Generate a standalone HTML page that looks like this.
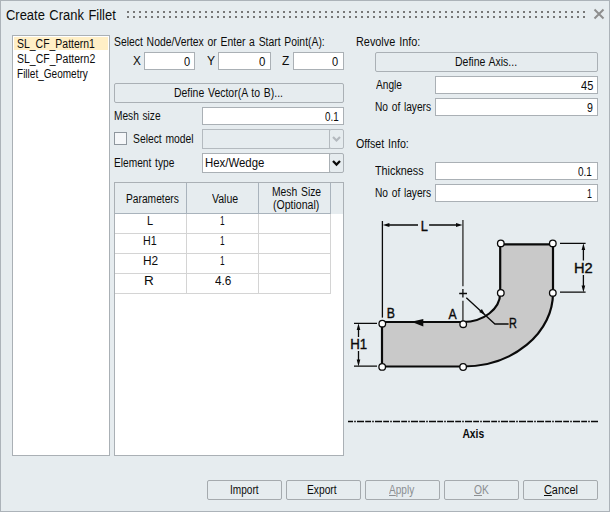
<!DOCTYPE html>
<html><head><meta charset="utf-8"><title>Create Crank Fillet</title>
<style>
html,body{margin:0;padding:0;}
body{width:610px;height:512px;overflow:hidden;background:#e6ecef;font-family:"Liberation Sans",sans-serif;}
#w{position:relative;width:608px;height:510px;border:1px solid #acb3b9;background:#e6ecef;overflow:hidden;}
#o{position:absolute;left:-1px;top:-1px;width:610px;height:512px;}
.t{position:absolute;word-spacing:1px;white-space:nowrap;display:block;transform-origin:0 0;}
.b{position:absolute;box-sizing:border-box;display:block;}
u{text-decoration:underline;text-underline-offset:1px;}
</style></head><body><div id="w"><div id="o">
<span class="t" style="left:5.81px;top:6.90px;font-size:14px;line-height:17px;color:#0c0c0c;font-weight:normal;transform:scaleX(0.9246)">Create Crank Fillet</span>
<svg class="b" style="left:0;top:0" width="610" height="30" fill="#777"><rect x="127" y="11" width="2" height="2"/><rect x="127" y="16" width="2" height="2"/><rect x="133" y="11" width="2" height="2"/><rect x="133" y="16" width="2" height="2"/><rect x="139" y="11" width="2" height="2"/><rect x="139" y="16" width="2" height="2"/><rect x="145" y="11" width="2" height="2"/><rect x="145" y="16" width="2" height="2"/><rect x="151" y="11" width="2" height="2"/><rect x="151" y="16" width="2" height="2"/><rect x="157" y="11" width="2" height="2"/><rect x="157" y="16" width="2" height="2"/><rect x="163" y="11" width="2" height="2"/><rect x="163" y="16" width="2" height="2"/><rect x="169" y="11" width="2" height="2"/><rect x="169" y="16" width="2" height="2"/><rect x="175" y="11" width="2" height="2"/><rect x="175" y="16" width="2" height="2"/><rect x="181" y="11" width="2" height="2"/><rect x="181" y="16" width="2" height="2"/><rect x="187" y="11" width="2" height="2"/><rect x="187" y="16" width="2" height="2"/><rect x="193" y="11" width="2" height="2"/><rect x="193" y="16" width="2" height="2"/><rect x="199" y="11" width="2" height="2"/><rect x="199" y="16" width="2" height="2"/><rect x="205" y="11" width="2" height="2"/><rect x="205" y="16" width="2" height="2"/><rect x="211" y="11" width="2" height="2"/><rect x="211" y="16" width="2" height="2"/><rect x="217" y="11" width="2" height="2"/><rect x="217" y="16" width="2" height="2"/><rect x="223" y="11" width="2" height="2"/><rect x="223" y="16" width="2" height="2"/><rect x="229" y="11" width="2" height="2"/><rect x="229" y="16" width="2" height="2"/><rect x="235" y="11" width="2" height="2"/><rect x="235" y="16" width="2" height="2"/><rect x="241" y="11" width="2" height="2"/><rect x="241" y="16" width="2" height="2"/><rect x="247" y="11" width="2" height="2"/><rect x="247" y="16" width="2" height="2"/><rect x="253" y="11" width="2" height="2"/><rect x="253" y="16" width="2" height="2"/><rect x="259" y="11" width="2" height="2"/><rect x="259" y="16" width="2" height="2"/><rect x="265" y="11" width="2" height="2"/><rect x="265" y="16" width="2" height="2"/><rect x="271" y="11" width="2" height="2"/><rect x="271" y="16" width="2" height="2"/><rect x="277" y="11" width="2" height="2"/><rect x="277" y="16" width="2" height="2"/><rect x="283" y="11" width="2" height="2"/><rect x="283" y="16" width="2" height="2"/><rect x="289" y="11" width="2" height="2"/><rect x="289" y="16" width="2" height="2"/><rect x="295" y="11" width="2" height="2"/><rect x="295" y="16" width="2" height="2"/><rect x="301" y="11" width="2" height="2"/><rect x="301" y="16" width="2" height="2"/><rect x="307" y="11" width="2" height="2"/><rect x="307" y="16" width="2" height="2"/><rect x="313" y="11" width="2" height="2"/><rect x="313" y="16" width="2" height="2"/><rect x="319" y="11" width="2" height="2"/><rect x="319" y="16" width="2" height="2"/><rect x="325" y="11" width="2" height="2"/><rect x="325" y="16" width="2" height="2"/><rect x="331" y="11" width="2" height="2"/><rect x="331" y="16" width="2" height="2"/><rect x="337" y="11" width="2" height="2"/><rect x="337" y="16" width="2" height="2"/><rect x="343" y="11" width="2" height="2"/><rect x="343" y="16" width="2" height="2"/><rect x="349" y="11" width="2" height="2"/><rect x="349" y="16" width="2" height="2"/><rect x="355" y="11" width="2" height="2"/><rect x="355" y="16" width="2" height="2"/><rect x="361" y="11" width="2" height="2"/><rect x="361" y="16" width="2" height="2"/><rect x="367" y="11" width="2" height="2"/><rect x="367" y="16" width="2" height="2"/><rect x="373" y="11" width="2" height="2"/><rect x="373" y="16" width="2" height="2"/><rect x="379" y="11" width="2" height="2"/><rect x="379" y="16" width="2" height="2"/><rect x="385" y="11" width="2" height="2"/><rect x="385" y="16" width="2" height="2"/><rect x="391" y="11" width="2" height="2"/><rect x="391" y="16" width="2" height="2"/><rect x="397" y="11" width="2" height="2"/><rect x="397" y="16" width="2" height="2"/><rect x="403" y="11" width="2" height="2"/><rect x="403" y="16" width="2" height="2"/><rect x="409" y="11" width="2" height="2"/><rect x="409" y="16" width="2" height="2"/><rect x="415" y="11" width="2" height="2"/><rect x="415" y="16" width="2" height="2"/><rect x="421" y="11" width="2" height="2"/><rect x="421" y="16" width="2" height="2"/><rect x="427" y="11" width="2" height="2"/><rect x="427" y="16" width="2" height="2"/><rect x="433" y="11" width="2" height="2"/><rect x="433" y="16" width="2" height="2"/><rect x="439" y="11" width="2" height="2"/><rect x="439" y="16" width="2" height="2"/><rect x="445" y="11" width="2" height="2"/><rect x="445" y="16" width="2" height="2"/><rect x="451" y="11" width="2" height="2"/><rect x="451" y="16" width="2" height="2"/><rect x="457" y="11" width="2" height="2"/><rect x="457" y="16" width="2" height="2"/><rect x="463" y="11" width="2" height="2"/><rect x="463" y="16" width="2" height="2"/><rect x="469" y="11" width="2" height="2"/><rect x="469" y="16" width="2" height="2"/><rect x="475" y="11" width="2" height="2"/><rect x="475" y="16" width="2" height="2"/><rect x="481" y="11" width="2" height="2"/><rect x="481" y="16" width="2" height="2"/><rect x="487" y="11" width="2" height="2"/><rect x="487" y="16" width="2" height="2"/><rect x="493" y="11" width="2" height="2"/><rect x="493" y="16" width="2" height="2"/><rect x="499" y="11" width="2" height="2"/><rect x="499" y="16" width="2" height="2"/><rect x="505" y="11" width="2" height="2"/><rect x="505" y="16" width="2" height="2"/><rect x="511" y="11" width="2" height="2"/><rect x="511" y="16" width="2" height="2"/><rect x="517" y="11" width="2" height="2"/><rect x="517" y="16" width="2" height="2"/><rect x="523" y="11" width="2" height="2"/><rect x="523" y="16" width="2" height="2"/><rect x="529" y="11" width="2" height="2"/><rect x="529" y="16" width="2" height="2"/><rect x="535" y="11" width="2" height="2"/><rect x="535" y="16" width="2" height="2"/><rect x="541" y="11" width="2" height="2"/><rect x="541" y="16" width="2" height="2"/><rect x="547" y="11" width="2" height="2"/><rect x="547" y="16" width="2" height="2"/><rect x="553" y="11" width="2" height="2"/><rect x="553" y="16" width="2" height="2"/><rect x="559" y="11" width="2" height="2"/><rect x="559" y="16" width="2" height="2"/><rect x="565" y="11" width="2" height="2"/><rect x="565" y="16" width="2" height="2"/><rect x="571" y="11" width="2" height="2"/><rect x="571" y="16" width="2" height="2"/><rect x="577" y="11" width="2" height="2"/><rect x="577" y="16" width="2" height="2"/><rect x="583" y="11" width="2" height="2"/><rect x="583" y="16" width="2" height="2"/></svg>
<svg class="b" style="left:590px;top:5px" width="18" height="18"><path d="M4.5 4.5 L13.5 13.5 M13.5 4.5 L4.5 13.5" stroke="#8e8e8e" stroke-width="2" fill="none"/></svg>
<div class="b" style="left:12px;top:35px;width:98px;height:421px;background:#fff;border:1px solid #aab0b5;border-radius:0px;"></div>
<div class="b" style="left:13.5px;top:37px;width:94.5px;height:12.7px;background:#ffefc6"></div>
<span class="t" style="left:16.86px;top:37.00px;font-size:12px;line-height:14px;color:#0c0c0c;font-weight:normal;transform:scaleX(0.8714)">SL_CF_Pattern1</span>
<span class="t" style="left:16.86px;top:52.00px;font-size:12px;line-height:14px;color:#0c0c0c;font-weight:normal;transform:scaleX(0.8759)">SL_CF_Pattern2</span>
<span class="t" style="left:16.56px;top:66.80px;font-size:12px;line-height:14px;color:#0c0c0c;font-weight:normal;transform:scaleX(0.8358)">Fillet_Geometry</span>
<span class="t" style="left:114.47px;top:34.80px;font-size:12px;line-height:14px;color:#0c0c0c;font-weight:normal;transform:scaleX(0.8657)">Select Node/Vertex or Enter a Start Point(A):</span>
<span class="t" style="left:132.96px;top:54.00px;font-size:12.5px;line-height:15px;color:#0c0c0c;font-weight:normal;transform:scaleX(0.9419)">X</span>
<div class="b" style="left:144px;top:52px;width:51px;height:18px;background:#fff;border:1px solid #aab0b5;border-radius:0px;"></div>
<span class="t" style="left:183.96px;top:54.90px;font-size:12.5px;line-height:15px;color:#0c0c0c;font-weight:normal;transform:scaleX(0.8833)">0</span>
<span class="t" style="left:206.66px;top:54.00px;font-size:12.5px;line-height:15px;color:#0c0c0c;font-weight:normal;transform:scaleX(0.9677)">Y</span>
<div class="b" style="left:218px;top:52px;width:53px;height:18px;background:#fff;border:1px solid #aab0b5;border-radius:0px;"></div>
<span class="t" style="left:259.14px;top:54.90px;font-size:12.5px;line-height:15px;color:#0c0c0c;font-weight:normal;transform:scaleX(0.9167)">0</span>
<span class="t" style="left:282.06px;top:54.00px;font-size:12.5px;line-height:15px;color:#0c0c0c;font-weight:normal;transform:scaleX(0.9571)">Z</span>
<div class="b" style="left:293px;top:52px;width:51px;height:18px;background:#fff;border:1px solid #aab0b5;border-radius:0px;"></div>
<span class="t" style="left:332.36px;top:54.90px;font-size:12.5px;line-height:15px;color:#0c0c0c;font-weight:normal;transform:scaleX(0.8833)">0</span>
<div class="b" style="left:114px;top:83px;width:230px;height:20px;background:#e6ecef;border:1px solid #aab0b5;border-radius:2px;"></div>
<span class="t" style="left:174.03px;top:86.10px;font-size:12px;line-height:14px;color:#0c0c0c;font-weight:normal;transform:scaleX(0.8715)">Define Vector(A to B)...</span>
<span class="t" style="left:114.05px;top:108.90px;font-size:12px;line-height:14px;color:#0c0c0c;font-weight:normal;transform:scaleX(0.8467)">Mesh size</span>
<div class="b" style="left:202px;top:107px;width:142px;height:18px;background:#fff;border:1px solid #aab0b5;border-radius:0px;"></div>
<span class="t" style="left:324.61px;top:109.90px;font-size:12.5px;line-height:15px;color:#0c0c0c;font-weight:normal;transform:scaleX(0.7877)">0.1</span>
<div class="b" style="left:114px;top:132px;width:13px;height:13px;background:#f5f7f9;border:1px solid #8f979e;border-radius:0px;"></div>
<span class="t" style="left:133.17px;top:132.10px;font-size:12px;line-height:14px;color:#0c0c0c;font-weight:normal;transform:scaleX(0.8609)">Select model</span>
<div class="b" style="left:202px;top:129px;width:128px;height:20px;background:#e6ecef;border:1px solid #b4babf;border-radius:0px;"></div>
<div class="b" style="left:329px;top:129px;width:15px;height:20px;background:#e6ecef;border:1px solid #b4babf;border-radius:2px;"></div>
<svg class="b" style="left:329px;top:129px" width="15" height="20"><path d="M4 8 L7.5 11.5 L11 8" stroke="#b3b9be" stroke-width="2.2" fill="none"/></svg>
<span class="t" style="left:114.05px;top:155.90px;font-size:12px;line-height:14px;color:#0c0c0c;font-weight:normal;transform:scaleX(0.8489)">Element type</span>
<div class="b" style="left:202px;top:153px;width:128px;height:20px;background:#fff;border:1px solid #aab0b5;border-radius:0px;"></div>
<div class="b" style="left:329px;top:153px;width:15px;height:20px;background:#e6ecef;border:1px solid #aab0b5;border-radius:2px;"></div>
<svg class="b" style="left:329px;top:153px" width="15" height="20"><path d="M4 8 L7.5 11.5 L11 8" stroke="#0a0a0a" stroke-width="2.3" fill="none"/></svg>
<span class="t" style="left:205.45px;top:155.90px;font-size:12px;line-height:14px;color:#0c0c0c;font-weight:normal;transform:scaleX(0.9508)">Hex/Wedge</span>
<div class="b" style="left:114px;top:182px;width:230px;height:274px;background:#fff;border:1px solid #aab0b5;border-radius:0px;"></div>
<div class="b" style="left:115px;top:183px;width:228px;height:31px;background:#e6ecef"></div>
<div class="b" style="left:115px;top:213px;width:216px;height:1px;background:#a9b3bc"></div>
<div class="b" style="left:186px;top:183px;width:1px;height:31px;background:#a9b3bc"></div>
<div class="b" style="left:258px;top:183px;width:1px;height:31px;background:#a9b3bc"></div>
<div class="b" style="left:330px;top:183px;width:1px;height:31px;background:#a9b3bc"></div>
<div class="b" style="left:115px;top:233px;width:216px;height:1px;background:#d4d4d4"></div>
<div class="b" style="left:115px;top:253px;width:216px;height:1px;background:#d4d4d4"></div>
<div class="b" style="left:115px;top:273px;width:216px;height:1px;background:#d4d4d4"></div>
<div class="b" style="left:115px;top:293px;width:216px;height:1px;background:#d4d4d4"></div>
<div class="b" style="left:186px;top:214px;width:1px;height:80px;background:#d4d4d4"></div>
<div class="b" style="left:258px;top:214px;width:1px;height:80px;background:#d4d4d4"></div>
<div class="b" style="left:330px;top:214px;width:1px;height:80px;background:#d4d4d4"></div>
<span class="t" style="left:125.85px;top:192.00px;font-size:12px;line-height:14px;color:#0c0c0c;font-weight:normal;transform:scaleX(0.8529)">Parameters</span>
<span class="t" style="left:211.50px;top:192.00px;font-size:12px;line-height:14px;color:#0c0c0c;font-weight:normal;transform:scaleX(0.8786)">Value</span>
<span class="t" style="left:271.74px;top:184.80px;font-size:12px;line-height:14px;color:#0c0c0c;font-weight:normal;transform:scaleX(0.8613)">Mesh Size</span>
<span class="t" style="left:273.34px;top:198.00px;font-size:12px;line-height:14px;color:#0c0c0c;font-weight:normal;transform:scaleX(0.8780)">(Optional)</span>
<span class="t" style="left:146.69px;top:214.00px;font-size:12px;line-height:14px;color:#0c0c0c;font-weight:normal;transform:scaleX(0.9143)">L</span>
<span class="t" style="left:142.71px;top:234.00px;font-size:12px;line-height:14px;color:#0c0c0c;font-weight:normal;transform:scaleX(0.8945)">H1</span>
<span class="t" style="left:142.61px;top:254.00px;font-size:12px;line-height:14px;color:#0c0c0c;font-weight:normal;transform:scaleX(0.9891)">H2</span>
<span class="t" style="left:144.27px;top:274.00px;font-size:12px;line-height:14px;color:#0c0c0c;font-weight:normal;transform:scaleX(1.1286)">R</span>
<span class="t" style="left:219.88px;top:214.00px;font-size:12px;line-height:14px;color:#0c0c0c;font-weight:normal;transform:scaleX(0.6909)">1</span>
<span class="t" style="left:219.88px;top:234.00px;font-size:12px;line-height:14px;color:#0c0c0c;font-weight:normal;transform:scaleX(0.6909)">1</span>
<span class="t" style="left:219.88px;top:254.00px;font-size:12px;line-height:14px;color:#0c0c0c;font-weight:normal;transform:scaleX(0.6909)">1</span>
<span class="t" style="left:214.75px;top:274.00px;font-size:12px;line-height:14px;color:#0c0c0c;font-weight:normal;transform:scaleX(0.9812)">4.6</span>
<span class="t" style="left:355.89px;top:35.00px;font-size:12px;line-height:14px;color:#0c0c0c;font-weight:normal;transform:scaleX(0.9058)">Revolve Info:</span>
<div class="b" style="left:375px;top:52px;width:223px;height:20px;background:#e6ecef;border:1px solid #aab0b5;border-radius:2px;"></div>
<span class="t" style="left:455.03px;top:54.80px;font-size:12px;line-height:14px;color:#0c0c0c;font-weight:normal;transform:scaleX(0.8739)">Define Axis...</span>
<span class="t" style="left:375.60px;top:78.00px;font-size:12px;line-height:14px;color:#0c0c0c;font-weight:normal;transform:scaleX(0.8463)">Angle</span>
<div class="b" style="left:435px;top:76px;width:163px;height:18px;background:#fff;border:1px solid #aab0b5;border-radius:0px;"></div>
<span class="t" style="left:580.58px;top:79.10px;font-size:12.5px;line-height:15px;color:#0c0c0c;font-weight:normal;transform:scaleX(0.8830)">45</span>
<span class="t" style="left:374.75px;top:100.00px;font-size:12px;line-height:14px;color:#0c0c0c;font-weight:normal;transform:scaleX(0.8496)">No of layers</span>
<div class="b" style="left:435px;top:98px;width:163px;height:18px;background:#fff;border:1px solid #aab0b5;border-radius:0px;"></div>
<span class="t" style="left:586.78px;top:101.00px;font-size:12.5px;line-height:15px;color:#0c0c0c;font-weight:normal;transform:scaleX(0.8500)">9</span>
<span class="t" style="left:355.56px;top:137.00px;font-size:12px;line-height:14px;color:#0c0c0c;font-weight:normal;transform:scaleX(0.8879)">Offset Info:</span>
<span class="t" style="left:375.38px;top:164.10px;font-size:12px;line-height:14px;color:#0c0c0c;font-weight:normal;transform:scaleX(0.8995)">Thickness</span>
<div class="b" style="left:435px;top:162px;width:163px;height:18px;background:#fff;border:1px solid #aab0b5;border-radius:0px;"></div>
<span class="t" style="left:578.10px;top:164.80px;font-size:12.5px;line-height:15px;color:#0c0c0c;font-weight:normal;transform:scaleX(0.8000)">0.1</span>
<span class="t" style="left:374.75px;top:185.80px;font-size:12px;line-height:14px;color:#0c0c0c;font-weight:normal;transform:scaleX(0.8496)">No of layers</span>
<div class="b" style="left:435px;top:184px;width:163px;height:18px;background:#fff;border:1px solid #aab0b5;border-radius:0px;"></div>
<span class="t" style="left:586.89px;top:186.60px;font-size:12.5px;line-height:15px;color:#0c0c0c;font-weight:normal;transform:scaleX(0.7091)">1</span>
<div class="b" style="left:207px;top:480px;width:75px;height:20px;background:#e6ecef;border:1px solid #a5aaae;border-radius:2px;"></div>
<span class="t" style="left:229.86px;top:483.00px;font-size:12px;line-height:14px;color:#0c0c0c;font-weight:normal;transform:scaleX(0.8394)">Import</span>
<div class="b" style="left:286px;top:480px;width:75px;height:20px;background:#e6ecef;border:1px solid #a5aaae;border-radius:2px;"></div>
<span class="t" style="left:307.35px;top:483.00px;font-size:12px;line-height:14px;color:#0c0c0c;font-weight:normal;transform:scaleX(0.8533)">Export</span>
<div class="b" style="left:365px;top:480px;width:75px;height:20px;background:#e6ecef;border:1px solid #a5aaae;border-radius:2px;"></div>
<span class="t" style="left:389.10px;top:483.00px;font-size:12px;line-height:14px;color:#8c8f92;font-weight:normal;transform:scaleX(0.8400)"><u>A</u>pply</span>
<div class="b" style="left:444px;top:480px;width:75px;height:20px;background:#e6ecef;border:1px solid #a5aaae;border-radius:2px;"></div>
<span class="t" style="left:474.00px;top:483.00px;font-size:12px;line-height:14px;color:#8c8f92;font-weight:normal;transform:scaleX(0.8580)"><u>O</u>K</span>
<div class="b" style="left:523px;top:480px;width:75px;height:20px;background:#e6ecef;border:1px solid #a5aaae;border-radius:2px;"></div>
<span class="t" style="left:543.50px;top:483.00px;font-size:12px;line-height:14px;color:#0c0c0c;font-weight:normal;transform:scaleX(0.9068)"><u>C</u>ancel</span>
<svg class="b" style="left:0;top:0" width="610" height="512" viewBox="0 0 610 512" font-family="Liberation Sans, sans-serif" word-spacing="1">
<path d="M382 322 L463 322 A37.2 29 0 0 0 500.2 293 L500.2 244.3 L553 244.3 L553 293 A90 73.5 0 0 1 463 366.5 L382 366.5 Z" fill="#c9c9c9" stroke="#0a0a0a" stroke-width="2.2" stroke-linejoin="miter"/>
<path d="M382.4 221 V317.6" stroke="#0a0a0a" stroke-width="1.3" fill="none"/>
<path d="M462.9 220 V286.2 M462.9 300.7 V321" stroke="#585858" stroke-width="1.7" fill="none"/>
<path d="M459.2 293.5 H467 M462.9 289.1 V297.4" stroke="#0a0a0a" stroke-width="1.3" fill="none"/>
<path d="M388 225 H418 M429.1 225 H457.5" stroke="#0a0a0a" stroke-width="1.3" fill="none"/>
<path d="M382.8 225 L389.4 223.1 L389.4 226.9 Z M462.6 225 L456 223.1 L456 226.9 Z" fill="#0a0a0a"/>
<text transform="translate(420.69,230.5) scale(0.8444,1)" font-size="15.3" font-weight="normal" fill="#0a0a0a" stroke="#0a0a0a" stroke-width="0.4">L</text>
<path d="M354 323.4 H377 M354 366.2 H377" stroke="#0a0a0a" stroke-width="1.3" fill="none"/>
<path d="M358.5 329 V337 M358.5 351 V361" stroke="#0a0a0a" stroke-width="1.3" fill="none"/>
<path d="M358.5 323.2 L356.7 330 L360.3 330 Z M358.5 366.4 L356.7 359.6 L360.3 359.6 Z" fill="#0a0a0a"/>
<text transform="translate(350.26,348.8) scale(0.8686,1)" font-size="15.3" font-weight="normal" fill="#0a0a0a" stroke="#0a0a0a" stroke-width="0.4">H1</text>
<path d="M560 243.4 H585.6 M560 292.2 H585.6" stroke="#0a0a0a" stroke-width="1.3" fill="none"/>
<path d="M583.4 249 V260.5 M583.4 275 V287" stroke="#0a0a0a" stroke-width="1.3" fill="none"/>
<path d="M583.4 243.2 L581.6 250 L585.2 250 Z M583.4 292.4 L581.6 285.6 L585.2 285.6 Z" fill="#0a0a0a"/>
<text transform="translate(573.95,272.6) scale(0.9600,1)" font-size="15.3" font-weight="normal" fill="#0a0a0a" stroke="#0a0a0a" stroke-width="0.4">H2</text>
<path d="M411.3 321.8 L423.3 318.9 L423.3 326.6 Z" fill="#0a0a0a"/>
<path d="M466.3 297.7 L494.9 324 H508.6" stroke="#0a0a0a" stroke-width="1.3" fill="none"/>
<path d="M485.2 315 L479.2 311.9 L481.9 309 Z" fill="#0a0a0a"/>
<text transform="translate(509.06,328.4) scale(0.7111,1)" font-size="15.3" font-weight="normal" fill="#0a0a0a" stroke="#0a0a0a" stroke-width="0.4">R</text>
<text transform="translate(386.85,318.4) scale(0.8000,1)" font-size="15.3" font-weight="normal" fill="#0a0a0a" stroke="#0a0a0a" stroke-width="0.4">B</text>
<text transform="translate(448.45,318.6) scale(0.8000,1)" font-size="15.3" font-weight="normal" fill="#0a0a0a" stroke="#0a0a0a" stroke-width="0.4">A</text>
<g fill="#fff" stroke="#0a0a0a" stroke-width="1.3">
<circle cx="382.3" cy="323.7" r="3.3"/>
<circle cx="463.2" cy="324.2" r="3.3"/>
<circle cx="382.2" cy="366.9" r="3.3"/>
<circle cx="463.1" cy="367" r="3.3"/>
<circle cx="500.8" cy="292.9" r="3.3"/>
<circle cx="552.8" cy="292.9" r="3.3"/>
<circle cx="500.8" cy="243.4" r="3.3"/>
<circle cx="552.8" cy="243.4" r="3.3"/>
</g>
<path d="M348 421.5 H598" stroke="#0a0a0a" stroke-width="1.6" stroke-dasharray="5 1.2 1.6 1.2 7 1.2 5.8 1.2 1.6 1.2 7 1.2 5.8 1.2 1.6 1.2 7 1.2 5.8 1.2 1.6 1.2 7 1.2 5.8 1.2 1.6 1.2 7 1.2 5.8 1.2 1.6 1.2 7 1.2 5.8 1.2 1.6 1.2 7 1.2 5.8 1.2 1.6 1.2 7 1.2 5.8 1.2 1.6 1.2 7 1.2 5.8 1.2 1.6 1.2 7 1.2 5.8 1.2 1.6 1.2 7 1.2 5.8 1.2 1.6 1.2 7 1.2 5.8 1.2 1.6 1.2 7 1.2 5.8 1.2 1.6 1.2 7 1.2 5.8 1.2 1.6 1.2 7 1.2 5.8 1.2 1.6 1.2" fill="none"/>
<text transform="translate(462.38,437.6) scale(0.8606,1)" font-size="12" font-weight="bold" fill="#0a0a0a" stroke="#0a0a0a" stroke-width="0">Axis</text>
</svg>
</div></div></body></html>
